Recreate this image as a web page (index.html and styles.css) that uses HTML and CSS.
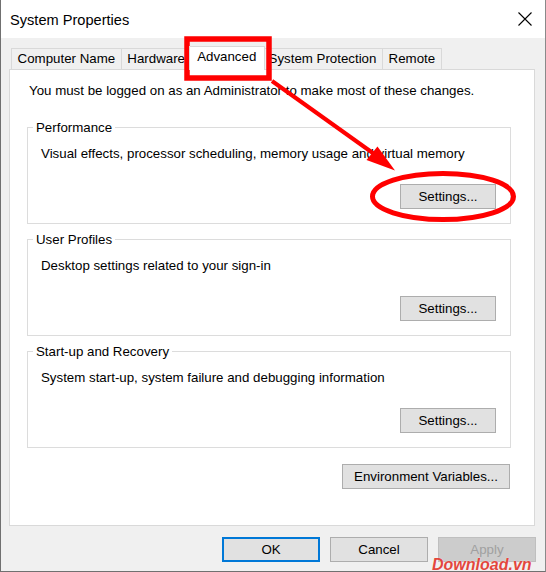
FILE: index.html
```html
<!DOCTYPE html>
<html lang="en">
<head>
<meta charset="utf-8">
<title>System Properties</title>
<link rel="stylesheet" href="styles.css">
</head>
<body>
<div class="window">
  <div class="titlebar">
    <span class="title">System Properties</span>
    <svg class="close" width="14" height="14" viewBox="0 0 14 14" aria-label="Close">
      <path d="M0.5 0.5 L13.5 13.5 M13.5 0.5 L0.5 13.5" stroke="#000" stroke-width="1.1" fill="none"/>
    </svg>
  </div>
  <div class="client">
    <div class="tabs">
      <div class="tab">Computer Name</div>
      <div class="tab">Hardware</div>
      <div class="tab sel">Advanced</div>
      <div class="tab">System Protection</div>
      <div class="tab">Remote</div>
    </div>
    <div class="panel">
      <p class="intro">You must be logged on as an Administrator to make most of these changes.</p>
      <fieldset class="group">
        <legend>Performance</legend>
        <p class="desc">Visual effects, processor scheduling, memory usage and virtual memory</p>
        <div class="row"><button class="btn set">Settings...</button></div>
      </fieldset>
      <fieldset class="group">
        <legend>User Profiles</legend>
        <p class="desc">Desktop settings related to your sign-in</p>
        <div class="row"><button class="btn set">Settings...</button></div>
      </fieldset>
      <fieldset class="group">
        <legend>Start-up and Recovery</legend>
        <p class="desc">System start-up, system failure and debugging information</p>
        <div class="row"><button class="btn set">Settings...</button></div>
      </fieldset>
      <div class="env-row"><button class="btn env">Environment Variables...</button></div>
    </div>
    <div class="footer">
      <button class="btn foot ok">OK</button>
      <button class="btn foot">Cancel</button>
      <button class="btn foot disabled">Apply</button>
    </div>
  </div>
  <svg class="annot" width="546" height="572" viewBox="1 0 546 572">
    <rect x="187" y="39" width="82" height="39" fill="none" stroke="#ff0000" stroke-width="5.5"/>
    <line x1="272" y1="81" x2="377" y2="156" stroke="#ff0000" stroke-width="4"/>
    <polygon points="395,170.5 366.5,160 377.5,146.5" fill="#ff0000"/>
    <ellipse cx="443" cy="196.5" rx="70.5" ry="23" fill="none" stroke="#ff0000" stroke-width="5"/>
  </svg>
  <div class="watermark">Download.vn</div>
</div>
</body>
</html>
```
FILE: styles.css
```css
* { box-sizing: border-box; }
html, body { margin: 0; padding: 0; }
body {
  font-family: "Liberation Sans", Arial, sans-serif;
  font-size: 13.3px;
  color: #000;
  background: #fff;
}
.window {
  position: relative;
  width: 546px;
  height: 572px;
  border-left: 1px solid #707070;
  border-right: 1px solid #8a8a8a;
  border-bottom: 1px solid #707070;
  background: #f0f0f0;
  overflow: hidden;
  display: flex;
  flex-direction: column;
}
.titlebar {
  height: 38px;
  flex: none;
  background: #fff;
  display: flex;
  align-items: center;
  justify-content: space-between;
  padding-left: 9px;
}
.title {
  font-size: 14.6px;
  padding-top: 2px;
}
.close {
  margin-right: 13px;
  display: block;
}
.client {
  flex: 1;
  padding-top: 8px;
  display: flex;
  flex-direction: column;
}
.tabs {
  display: flex;
  align-items: flex-end;
  margin-left: 10px;
  height: 23px;
}
.tab {
  height: 21px;
  line-height: 20px;
  padding: 0 5.6px;
  border: 1px solid #d9d9d9;
  border-bottom: none;
  margin-left: -1px;
  background: #f0f0f0;
  white-space: nowrap;
}
.tab:first-child { margin-left: 0; }
.tab.sel {
  position: relative;
  z-index: 1;
  background: #fff;
  height: 24px;
  padding: 0 7.6px 3px;
  margin-left: -3px;
  margin-right: -2px;
  margin-bottom: -1px;
}
.panel {
  height: 457px;
  margin: 0 10px 0 8px;
  background: #fff;
  border: 1px solid #d9d9d9;
  padding: 13px 23px 0 17px;
}
.intro {
  margin: 0;
  padding-left: 2px;
  line-height: 15px;
}
.group {
  margin: 22px 0 0;
  padding: 11px 14px 14px 5px;
  border: 1px solid #dcdcdc;
  min-width: 0;
}
.group + .group { margin-top: 8px; }
.group legend {
  padding: 0 3px;
  line-height: 15px;
  font-size: 13.3px;
}
.desc {
  margin: 0 0 0 8px;
  line-height: 15px;
}
.row {
  display: flex;
  justify-content: flex-end;
  margin-top: 23px;
}
.btn {
  font-family: "Liberation Sans", Arial, sans-serif;
  font-size: 13.3px;
  line-height: 15px;
  color: #000;
  background: #e1e1e1;
  border: 1px solid #adadad;
  height: 25px;
  padding: 0;
  margin: 0;
  border-radius: 0;
}
.set { width: 96px; }
.env-row {
  display: flex;
  justify-content: flex-end;
  margin-top: 16px;
  margin-right: 1px;
}
.env { width: 168px; }
.footer {
  display: flex;
  justify-content: flex-end;
  gap: 10px;
  padding: 11px 9px 0 0;
}
.foot { width: 98px; }
.ok { border: 2px solid #0078d7; }
.disabled {
  background: #cccccc;
  border-color: #bfbfbf;
  color: #a0a0a0;
}
.annot {
  position: absolute;
  left: 0;
  top: 0;
  pointer-events: none;
}
.watermark {
  position: absolute;
  left: 431px;
  top: 558px;
  font-family: "Liberation Sans", Arial, sans-serif;
  font-weight: bold;
  font-style: italic;
  font-size: 16px;
  line-height: 13px;
  color: #e2473d;
  white-space: nowrap;
  text-shadow: 0 0 1px #fff;
}
```
